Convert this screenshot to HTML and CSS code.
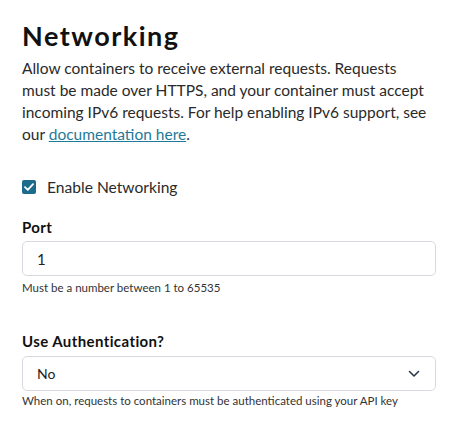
FILE: index.html
```html
<!DOCTYPE html>
<html>
<head>
<meta charset="utf-8">
<link rel="stylesheet" href="styles.css">
</head>
<body>
<div class="page">
  <h1 class="title">Networking</h1>
  <p class="intro">Allow containers to receive external requests. Requests must be made over HTTPS, and your container must accept incoming IPv6 requests. For help enabling IPv6 support, see our <a class="link" href="#">documentation here</a>.</p>

  <label class="check">
    <span class="box">
      <svg width="10" height="8" viewBox="0 0 10 8"><path d="M1 4.2 L3.8 6.8 L9 1.2" fill="none" stroke="#fff" stroke-width="1.8" stroke-linecap="round" stroke-linejoin="round"/></svg>
    </span>
    <span class="check-text">Enable Networking</span>
  </label>

  <div class="field">
    <div class="label">Port</div>
    <div class="control">1</div>
    <div class="help">Must be a number between 1 to 65535</div>
  </div>

  <div class="field field-auth">
    <div class="label">Use Authentication?</div>
    <div class="control select">
      <span>No</span>
      <svg class="chev" width="12" height="8" viewBox="0 0 12 8"><path d="M1.5 1.5 L6 6 L10.5 1.5" fill="none" stroke="#2b3a4a" stroke-width="1.6" stroke-linecap="round" stroke-linejoin="round"/></svg>
    </div>
    <div class="help">When on, requests to containers must be authenticated using your API key</div>
  </div>
</div>
</body>
</html>
```

FILE: styles.css
```css
html, body {
  margin: 0;
  padding: 0;
  background: #fff;
}
.page {
  width: 414px;
  padding: 20px 0 0 22px;
  font-family: Lato, "Open Sans", sans-serif;
  color: #1f1f1f;
}
.title {
  margin: 0;
  font-size: 27px;
  line-height: 32px;
  font-weight: 700;
  letter-spacing: 1.5px;
  color: #111;
}
.intro {
  width: 408px;
  margin: 5px 0 0;
  font-size: 15.5px;
  line-height: 22px;
  color: #2a2a2a;
}
.link {
  color: #1f7a99;
  text-decoration: underline;
}
.check {
  display: flex;
  align-items: center;
  gap: 11px;
  margin-top: 33px;
}
.box {
  width: 14px;
  height: 14px;
  border-radius: 2px;
  background: #1c6b8a;
  display: flex;
  align-items: center;
  justify-content: center;
}
.check-text {
  font-size: 15.6px;
  color: #2a2a2a;
}
.field {
  margin-top: 21px;
}
.label {
  font-size: 15px;
  font-weight: 700;
  letter-spacing: 0.4px;
  color: #111;
  line-height: 20px;
}
.control {
  margin-top: 4px;
  height: 35px;
  box-sizing: border-box;
  border: 1px solid #d6dadf;
  border-radius: 5px;
  padding: 0 14px;
  display: flex;
  align-items: center;
  font-size: 15px;
  color: #222;
}
.select {
  justify-content: space-between;
  font-size: 14px;
  padding-right: 15px;
}
.field-auth .control {
  margin-top: 5px;
}
.help {
  margin-top: 5px;
  font-size: 11.5px;
  color: #333;
}
.field-auth .help {
  margin-top: 3px;
}
.field-auth {
  margin-top: 37px;
}
```
